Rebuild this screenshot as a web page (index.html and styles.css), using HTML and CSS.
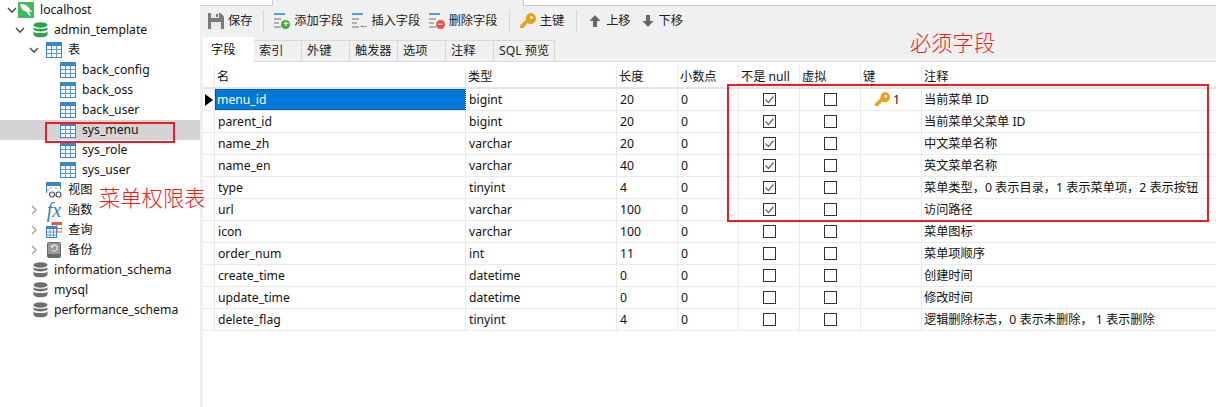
FILE: index.html
```html
<!DOCTYPE html>
<html lang="zh-CN">
<head>
<meta charset="utf-8">
<title>sys_menu</title>
<link rel="stylesheet" href="styles.css">
</head>
<body>
<svg class="defs" width="0" height="0">
  <symbol id="chev-open" viewBox="0 0 10 10"><path d="M1 3l4 4 4-4" fill="none" stroke="#555" stroke-width="1.6"/></symbol>
  <symbol id="chev-closed" viewBox="0 0 10 10"><path d="M3 1l4 4-4 4" fill="none" stroke="#aaa" stroke-width="1.6"/></symbol>
  <symbol id="dolphin" viewBox="0 0 16 16"><rect width="16" height="16" rx="1" fill="#3fbb5c"/><path d="M2 2c4-.5 7 1 9 4 1 1.500 2.500 3 3.500 3.500-1.500.5-2 0-3-.5 0 2 .5 4 1.500 5.500-2-1-3.500-3-4.500-5C6 9.500 5 8 4 7 3 6 2.500 4 2 2z" fill="#fff"/></symbol>
  <symbol id="db-green" viewBox="0 0 15 16"><ellipse cx="7.500" cy="3" rx="7" ry="2.800" fill="#2aa34a"/><path d="M.5 5.200c1 2 13 2 14 0v2.400c-1 2.400-13 2.400-14 0z" fill="#2aa34a"/><path d="M.5 9.500c1 2 13 2 14 0v3.200c-1 3.400-13 3.400-14 0z" fill="#2aa34a"/></symbol>
  <symbol id="db-gray" viewBox="0 0 15 16"><ellipse cx="7.500" cy="3" rx="7" ry="2.800" fill="#6e6e6e"/><path d="M.5 5.200c1 2 13 2 14 0v2.400c-1 2.400-13 2.400-14 0z" fill="#6e6e6e"/><path d="M.5 9.500c1 2 13 2 14 0v3.200c-1 3.400-13 3.400-14 0z" fill="#6e6e6e"/></symbol>
  <symbol id="table" viewBox="0 0 16 16"><rect x=".5" y=".5" width="15" height="15" fill="#fff" stroke="#3d85c6"/><rect width="16" height="4" fill="#3d85c6"/><path d="M5.500 4v11M10.500 4v11M1 7.500h14M1 11.500h14" stroke="#5b9bd5" fill="none"/></symbol>
  <symbol id="view" viewBox="0 0 16 16"><path d="M.5 11V.5h14V7" fill="#fff" stroke="#3d85c6"/><rect width="15" height="4" fill="#3d85c6"/><path d="M5 5v2M10 5v2M1 8h2" stroke="#5b9bd5"/><circle cx="6" cy="12.500" r="2.500" fill="#fff" stroke="#555" stroke-width="1.200"/><circle cx="12.500" cy="12.500" r="2.500" fill="#fff" stroke="#555" stroke-width="1.200"/></symbol>
  <symbol id="query" viewBox="0 0 16 16"><rect x="6" y="0" width="10" height="10" fill="#fff" stroke="#d9603b"/><rect x="6" y="0" width="10" height="3" fill="#d9603b"/><path d="M11 3v7M6 6.500h10" stroke="#d9603b"/><rect x=".5" y="4.500" width="10" height="11" fill="#fff" stroke="#3d85c6"/><rect y="4" width="11" height="3" fill="#3d85c6"/><path d="M4 7v8M7.500 7v8M1 10h9M1 13h9" stroke="#5b9bd5"/></symbol>
  <symbol id="backup" viewBox="0 0 14 16"><rect width="14" height="16" rx="2" fill="#6a6a6a"/><rect x="1" y="1" width="12" height="11" rx="1" fill="#9a9a9a"/><path d="M4.500 5a3 3 0 1 1 .5 3" fill="none" stroke="#eee" stroke-width="1.100"/><path d="M3 4h3v2.500z" fill="#eee"/></symbol>
  <symbol id="save" viewBox="0 0 16 16"><path d="M0 0h12.500L16 3.500V16H0z" fill="#7b7b7b"/><rect x="3" y="0" width="8" height="5" fill="#e8e8e8"/><rect x="8" y="1" width="2" height="3" fill="#7b7b7b"/><rect x="3" y="9" width="10" height="7" fill="#e8e8e8"/></symbol>
  <symbol id="key" viewBox="0 0 16 16"><path d="M10.500 0a5.500 5.500 0 1 1-3 10.100L6 11.500V13H4v2H0v-2.500l6-6A5.500 5.500 0 0 1 10.500 0z" fill="#e6a21f"/><circle cx="11.500" cy="4.500" r="1.500" fill="#fff6d8"/></symbol>
  <symbol id="lines" viewBox="0 0 11 16"><path d="M0 1h11" stroke="#4ba3e3" stroke-width="2"/><path d="M0 6h7M0 10h5M0 14h7" stroke="#b0b0b0" stroke-width="2"/></symbol>
  <symbol id="up" viewBox="0 0 12 12"><path d="M6 0l5.500 6H8v6H4V6H.5z" fill="#666"/></symbol>
  <symbol id="down" viewBox="0 0 12 12"><path d="M6 12L.5 6H4V0h4v6h3.500z" fill="#666"/></symbol>
  <symbol id="check" viewBox="0 0 13 13"><rect x=".5" y=".5" width="12" height="12" fill="#fff" stroke="#333"/><path d="M2.500 6.500l3 3 5-6" fill="none" stroke="#666" stroke-width="1.200"/></symbol>
  <symbol id="uncheck" viewBox="0 0 13 13"><rect x=".5" y=".5" width="12" height="12" fill="#fff" stroke="#333"/></symbol>
  <symbol id="arrow" viewBox="0 0 8 12"><path d="M0 0l8 6-8 6z" fill="#000"/></symbol>
</svg>

<aside class="tree">
  <div class="node lv0"><svg class="chev"><use href="#chev-open"/></svg><svg class="ico"><use href="#dolphin"/></svg><span>localhost</span></div>
  <div class="node lv1"><svg class="chev"><use href="#chev-open"/></svg><svg class="ico db"><use href="#db-green"/></svg><span>admin_template</span></div>
  <div class="node lv2"><svg class="chev"><use href="#chev-open"/></svg><svg class="ico"><use href="#table"/></svg><span>表</span></div>
  <div class="node lv3"><svg class="ico"><use href="#table"/></svg><span>back_config</span></div>
  <div class="node lv3"><svg class="ico"><use href="#table"/></svg><span>back_oss</span></div>
  <div class="node lv3"><svg class="ico"><use href="#table"/></svg><span>back_user</span></div>
  <div class="node lv3 selected"><svg class="ico"><use href="#table"/></svg><span>sys_menu</span></div>
  <div class="node lv3"><svg class="ico"><use href="#table"/></svg><span>sys_role</span></div>
  <div class="node lv3"><svg class="ico"><use href="#table"/></svg><span>sys_user</span></div>
  <div class="node lv2 leaf"><svg class="ico"><use href="#view"/></svg><span>视图</span></div>
  <div class="node lv2"><svg class="chev"><use href="#chev-closed"/></svg><i class="fx">fx</i><span>函数</span></div>
  <div class="node lv2"><svg class="chev"><use href="#chev-closed"/></svg><svg class="ico"><use href="#query"/></svg><span>查询</span></div>
  <div class="node lv2"><svg class="chev"><use href="#chev-closed"/></svg><svg class="ico"><use href="#backup"/></svg><span>备份</span></div>
  <div class="node lv1 leaf"><svg class="ico db"><use href="#db-gray"/></svg><span>information_schema</span></div>
  <div class="node lv1 leaf"><svg class="ico db"><use href="#db-gray"/></svg><span>mysql</span></div>
  <div class="node lv1 leaf"><svg class="ico db"><use href="#db-gray"/></svg><span>performance_schema</span></div>
</aside>

<main class="main">
  <div class="topstrip"><div class="strip-a"></div><div class="strip-b"></div></div>
  <div class="toolbar">
    <button class="tool save"><svg class="t-ico"><use href="#save"/></svg>保存</button>
    <b class="sep sep1"></b>
    <button class="tool"><span class="t-combo"><svg class="t-lines"><use href="#lines"/></svg><b class="badge plus">+</b></span>添加字段</button>
    <button class="tool"><span class="t-combo"><svg class="t-lines"><use href="#lines"/></svg><b class="badge arrow-left">←</b></span>插入字段</button>
    <button class="tool"><span class="t-combo"><svg class="t-lines"><use href="#lines"/></svg><b class="badge minus">−</b></span>删除字段</button>
    <b class="sep sep2"></b>
    <button class="tool"><svg class="t-ico"><use href="#key"/></svg>主键</button>
    <b class="sep sep3"></b>
    <button class="tool move"><svg class="t-arrow"><use href="#up"/></svg>上移</button>
    <button class="tool move"><svg class="t-arrow"><use href="#down"/></svg>下移</button>
  </div>
  <div class="tabs">
    <div class="tab active">字段</div>
    <div class="tab">索引</div>
    <div class="tab">外键</div>
    <div class="tab">触发器</div>
    <div class="tab">选项</div>
    <div class="tab">注释</div>
    <div class="tab sql">SQL 预览</div>
  </div>
  <div class="grid">
    <div class="row head"><div class="ind"></div><div>名</div><div>类型</div><div>长度</div><div>小数点</div><div>不是 null</div><div>虚拟</div><div>键</div><div>注释</div></div>

    <div class="row"><div class="ind"><svg class="cur"><use href="#arrow"/></svg></div><div class="cell-sel">menu_id</div><div>bigint</div><div>20</div><div>0</div><div class="c"><svg class="box"><use href="#check"/></svg></div><div class="c"><svg class="box"><use href="#uncheck"/></svg></div><div class="keycell"><svg class="k"><use href="#key"/></svg>1</div><div>当前菜单 ID</div></div>
    <div class="row"><div class="ind"></div><div>parent_id</div><div>bigint</div><div>20</div><div>0</div><div class="c"><svg class="box"><use href="#check"/></svg></div><div class="c"><svg class="box"><use href="#uncheck"/></svg></div><div></div><div>当前菜单父菜单 ID</div></div>
    <div class="row"><div class="ind"></div><div>name_zh</div><div>varchar</div><div>20</div><div>0</div><div class="c"><svg class="box"><use href="#check"/></svg></div><div class="c"><svg class="box"><use href="#uncheck"/></svg></div><div></div><div>中文菜单名称</div></div>
    <div class="row"><div class="ind"></div><div>name_en</div><div>varchar</div><div>40</div><div>0</div><div class="c"><svg class="box"><use href="#check"/></svg></div><div class="c"><svg class="box"><use href="#uncheck"/></svg></div><div></div><div>英文菜单名称</div></div>
    <div class="row"><div class="ind"></div><div>type</div><div>tinyint</div><div>4</div><div>0</div><div class="c"><svg class="box"><use href="#check"/></svg></div><div class="c"><svg class="box"><use href="#uncheck"/></svg></div><div></div><div>菜单类型，0 表示目录，1 表示菜单项，2 表示按钮</div></div>
    <div class="row"><div class="ind"></div><div>url</div><div>varchar</div><div>100</div><div>0</div><div class="c"><svg class="box"><use href="#check"/></svg></div><div class="c"><svg class="box"><use href="#uncheck"/></svg></div><div></div><div>访问路径</div></div>
    <div class="row"><div class="ind"></div><div>icon</div><div>varchar</div><div>100</div><div>0</div><div class="c"><svg class="box"><use href="#uncheck"/></svg></div><div class="c"><svg class="box"><use href="#uncheck"/></svg></div><div></div><div>菜单图标</div></div>
    <div class="row"><div class="ind"></div><div>order_num</div><div>int</div><div>11</div><div>0</div><div class="c"><svg class="box"><use href="#uncheck"/></svg></div><div class="c"><svg class="box"><use href="#uncheck"/></svg></div><div></div><div>菜单项顺序</div></div>
    <div class="row"><div class="ind"></div><div>create_time</div><div>datetime</div><div>0</div><div>0</div><div class="c"><svg class="box"><use href="#uncheck"/></svg></div><div class="c"><svg class="box"><use href="#uncheck"/></svg></div><div></div><div>创建时间</div></div>
    <div class="row"><div class="ind"></div><div>update_time</div><div>datetime</div><div>0</div><div>0</div><div class="c"><svg class="box"><use href="#uncheck"/></svg></div><div class="c"><svg class="box"><use href="#uncheck"/></svg></div><div></div><div>修改时间</div></div>
    <div class="row"><div class="ind"></div><div>delete_flag</div><div>tinyint</div><div>4</div><div>0</div><div class="c"><svg class="box"><use href="#uncheck"/></svg></div><div class="c"><svg class="box"><use href="#uncheck"/></svg></div><div></div><div>逻辑删除标志，0 表示未删除， 1 表示删除</div></div>
  </div>
</main>

<div class="mark mark-menu"></div>
<div class="mark mark-fields"></div>
<div class="note note-menu">菜单权限表</div>
<div class="note note-fields">必须字段</div>
</body>
</html>
```
FILE: styles.css
```css
* { box-sizing: border-box; }
html, body { margin: 0; height: 407px; overflow: hidden; }
body {
  display: flex;
  background: #fff;
  color: #111;
  font: 12.2px/20px "Noto Sans", "Noto Sans CJK SC", sans-serif;
  position: relative;
}
.defs { position: absolute; }

/* tree */
.tree { width: 200px; flex: none; background: #fff; }
.node { height: 20px; display: flex; align-items: center; white-space: nowrap; }
.node span { margin-left: 6px; }
.lv0 { padding-left: 7px; }
.lv1 { padding-left: 15px; }
.lv2 { padding-left: 29px; }
.lv3 { padding-left: 60px; }
.lv1.leaf { padding-left: 33px; }
.lv2.leaf { padding-left: 46px; }
.selected { background: #d4d4d4; }
.chev { width: 10px; height: 10px; margin-right: 7px; flex: none; }
.lv0 .chev { margin-right: 1px; }
.lv1 .chev { margin-right: 8px; }
.lv2 .chev { margin-right: 7px; }
.ico { width: 16px; height: 16px; flex: none; }
.ico.db { width: 15px; }
.fx {
  width: 16px; flex: none; text-align: center;
  font: italic 20px/20px "Liberation Serif", serif;
  color: #3d7fb8;
}

/* main */
.main { flex: 1; min-width: 0; display: flex; flex-direction: column; background: #f0f0f0; padding-left: 3px; }
.topstrip { height: 6px; flex: none; display: flex; justify-content: space-between; margin-left: -3px; }
.strip-a { width: 73px; background: #fff; border-right: 1px solid #d0d0d0; border-bottom: 1px solid #d0d0d0; }
.strip-b { width: 693px; background: #fff; border-left: 1px solid #c8c8c8; border-bottom: 1px solid #c8c8c8; }

.toolbar { height: 33px; flex: none; display: flex; align-items: center; padding: 0 0 3px 5px; }
.tool {
  display: flex; align-items: center; border: 0; padding: 0; margin: 0 8.4px 0 0;
  background: none; color: #222; font: inherit; white-space: nowrap;
}
.t-ico { width: 16px; height: 16px; margin-right: 4px; flex: none; }
.sep { width: 1px; height: 22px; background: #d8d8d8; flex: none; }
.sep1 { margin: 0 10px 0 2.6px; }
.sep2 { margin: 0 10px 0 3px; }
.sep3 { margin: 0 12px 0 3.6px; }
.t-combo { position: relative; width: 16px; height: 16px; margin-right: 4px; flex: none; }
.t-lines { width: 11px; height: 16px; display: block; }
.badge {
  position: absolute; right: 0; bottom: 0; width: 9px; height: 9px; border-radius: 50%;
  font: bold 9px/9px "Liberation Sans", sans-serif; color: #fff; text-align: center;
}
.plus { background: #3dae3d; }
.minus { background: #e8504a; }
.arrow-left { background: none; color: #555; font-size: 11px; }
.tool.move { margin-right: 11px; }
.t-arrow { width: 12px; height: 12px; margin-right: 5px; flex: none; }

.tabs { height: 23px; flex: none; display: flex; border-bottom: 1px solid #d9d9d9; }
.tab {
  width: 48px; height: 22px; border: 1px solid #d9d9d9; border-left: 0; border-bottom: 0;
  display: flex; align-items: center; padding: 0 0 2px 5px; margin-top: 1px;
  color: #222; white-space: nowrap;
}
.tab.active { width: 51px; height: 25px; margin-top: -2px; background: #fff; border: 0; padding: 0 0 0 8px; color: #111; }
.tab.sql { width: 61px; }

.grid { flex: 1; background: #fff; padding-top: 4px; }
.row {
  display: grid;
  grid-template-columns: 12px 251px 151px 61px 61px 61px 61px 61px 1fr;
  height: 22px;
  border-bottom: 1px solid #eaeaea;
}
.row > div {
  border-right: 1px solid #eaeaea;
  padding-left: 3px;
  line-height: 21px;
  white-space: nowrap;
  min-width: 0;
}
.row > div:last-child { border-right: 0; padding-left: 2px; }
.row > .ind { padding: 0; display: flex; align-items: center; }
.head { border-bottom: 2px solid #e4e4e4; height: 23px; }
.head > div { padding-left: 2px; }
.cur { width: 8px; height: 12px; margin-left: 2px; }
.row > .cell-sel {
  background: #0078d7; color: #fff; padding-left: 2px;
  outline: 1px dotted #3a2a10; outline-offset: -1px;
}
.row > .c { padding: 0; display: flex; align-items: center; justify-content: center; }
.box { width: 13px; height: 13px; }
.row > .keycell { display: flex; align-items: center; padding-left: 14px; color: #111; }
.k { width: 15px; height: 15px; margin-right: 3px; }

/* annotations */
.mark { position: absolute; border: 2px solid #ed1c24; pointer-events: none; }
.mark-menu { left: 45px; top: 122px; width: 130px; height: 21px; }
.mark-fields { left: 727px; top: 84px; width: 482px; height: 138px; }
.note { position: absolute; color: #ed1c24; font: 300 21.3px/26px "Noto Sans CJK SC", sans-serif; white-space: nowrap; }
.note-menu { left: 99px; top: 184px; }
.note-fields { left: 910px; top: 29px; }
```
